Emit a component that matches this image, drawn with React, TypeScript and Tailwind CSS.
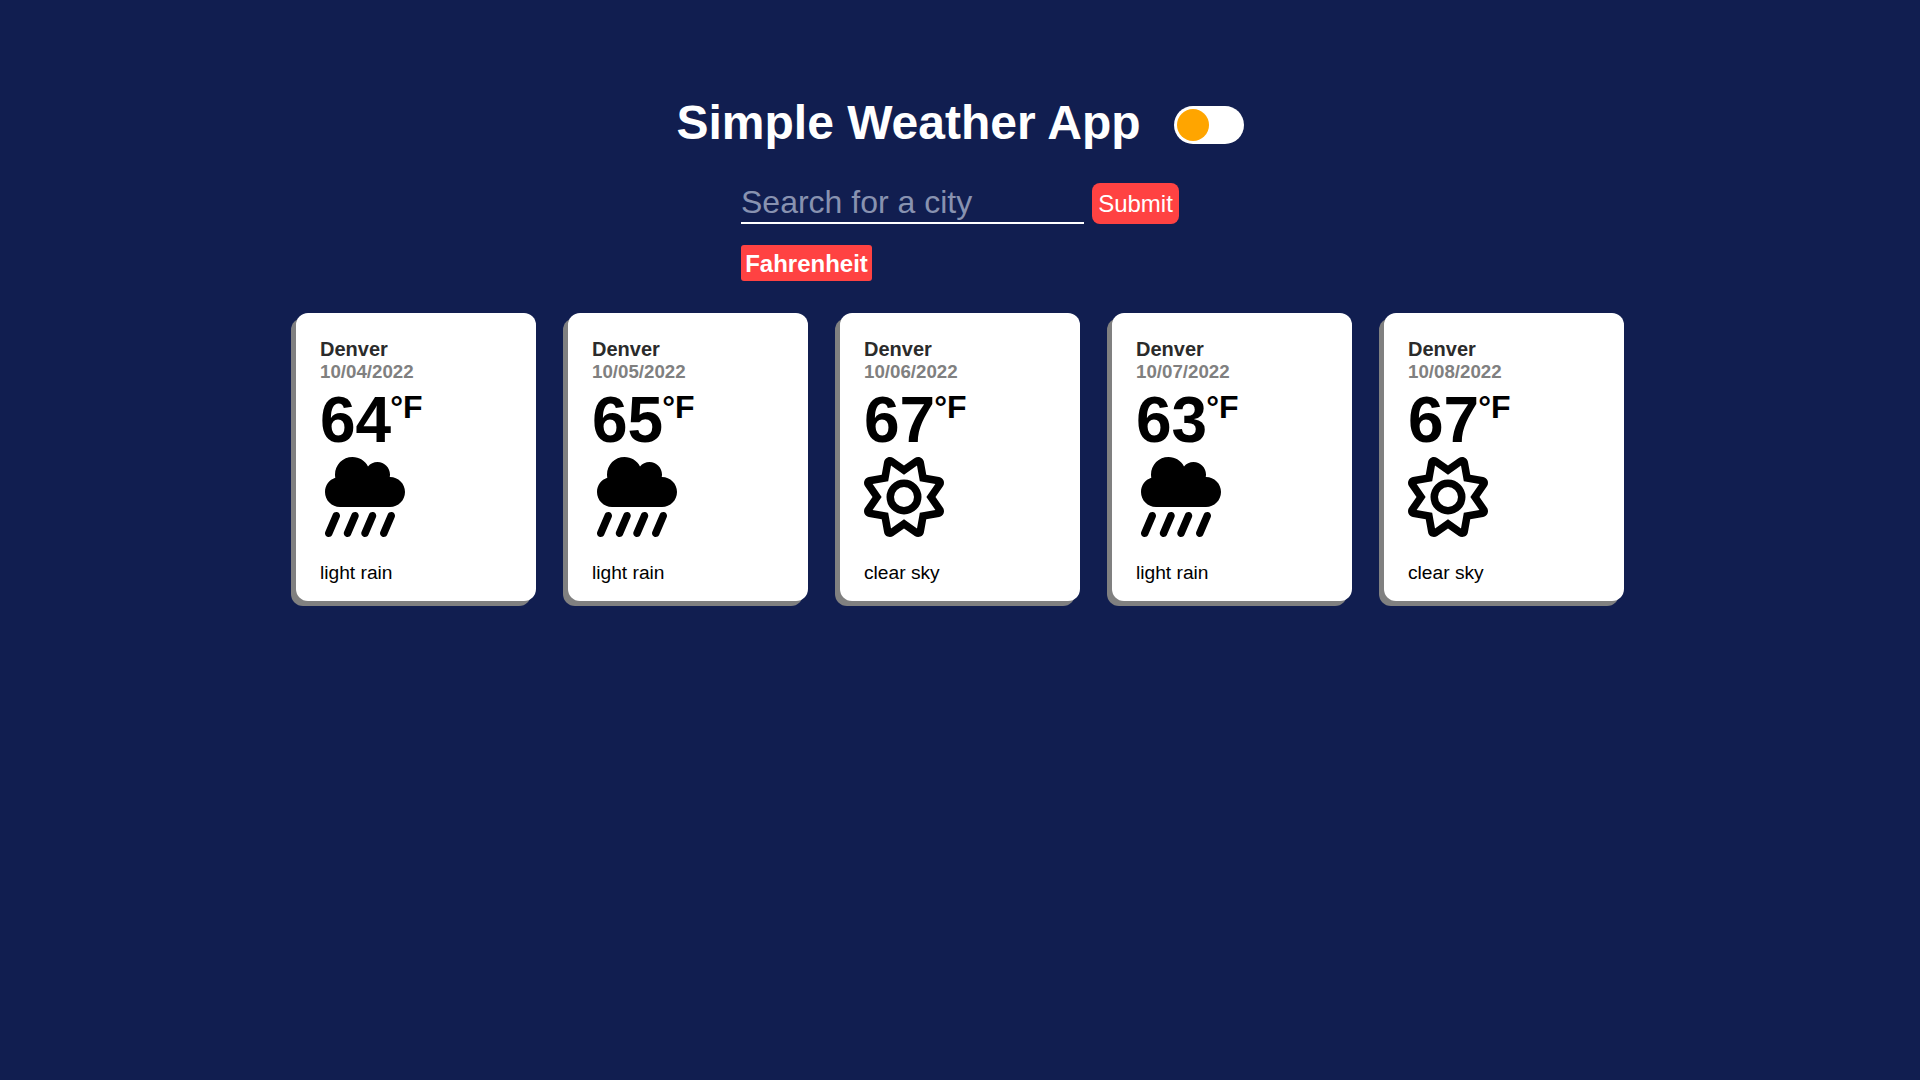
import { FaCloudShowersHeavy } from "react-icons/fa6";

type Day = { date: string; temp: number; sky: "light rain" | "clear sky" };

const days: Day[] = [
  { date: "10/04/2022", temp: 64, sky: "light rain" },
  { date: "10/05/2022", temp: 65, sky: "light rain" },
  { date: "10/06/2022", temp: 67, sky: "clear sky" },
  { date: "10/07/2022", temp: 63, sky: "light rain" },
  { date: "10/08/2022", temp: 67, sky: "clear sky" },
];

function SunIcon({ className }: { className?: string }) {
  return (
    <svg viewBox="0 0 512 512" fill="currentColor" fillRule="evenodd" className={className}>
      <path d="M505.2 324.8l-47.73-68.78l47.75-68.81c7.359-10.62 8.797-24.12 3.844-36.06c-4.969-11.94-15.52-20.44-28.22-22.72l-82.39-14.88l-14.89-82.41c-2.281-12.72-10.76-23.25-22.69-28.22c-11.97-4.936-25.42-3.498-36.12 3.844L256 54.49L187.2 6.709C176.5-.6016 163.1-2.039 151.1 2.896c-11.92 4.971-20.4 15.5-22.7 28.19l-14.89 82.44L31.15 128.4C18.42 130.7 7.854 139.2 2.9 151.2C-2.051 163.1-.5996 176.6 6.775 187.2l47.73 68.78l-47.75 68.81c-7.359 10.62-8.795 24.12-3.844 36.06c4.969 11.94 15.52 20.44 28.22 22.72l82.39 14.88l14.89 82.41c2.297 12.72 10.78 23.25 22.7 28.22c11.95 4.906 25.44 3.531 36.09-3.844L256 457.5l68.83 47.78C331.3 509.7 338.8 512 346.3 512c4.906 0 9.859-.9687 14.56-2.906c11.92-4.969 20.4-15.5 22.7-28.19l14.89-82.44l82.37-14.88c12.73-2.281 23.3-10.78 28.25-22.75C514.1 348.9 512.6 335.4 505.2 324.8zM456.8 339.2l-99.61 18l-18 99.63L256 399.1L172.8 456.8l-18-99.63l-99.61-18L112.9 256L55.23 172.8l99.61-18l18-99.63L256 112.9l83.15-57.75l18.02 99.66l99.61 18L399.1 256L456.8 339.2z" />
      <circle cx="256" cy="256" r="88" fill="none" stroke="currentColor" strokeWidth="48" />
    </svg>
  );
}

function WeatherCard({ day }: { day: Day }) {
  return (
    <article className="h-72 w-60 rounded-xl bg-white px-6 pt-[25px] text-black shadow-[-5px_5px_0_0_#808080]">
      <h2 className="text-[20px] leading-[23px] font-bold text-[#2b2b2b]">Denver</h2>
      <p className="text-[18.72px] leading-[22px] font-bold text-[#808080]">{day.date}</p>
      <div className="mt-0.5 flex h-[72px] items-start font-bold">
        <span className="text-[64px] leading-[71px]">{day.temp}</span>
        <span className="-ml-px text-[32px] leading-[45px]">°F</span>
      </div>
      {day.sky === "light rain" ? (
        <FaCloudShowersHeavy className="ml-[5px] size-20" />
      ) : (
        <SunIcon className="size-20" />
      )}
      <p className="mt-[25px] text-[19.2px] leading-[22px]">{day.sky}</p>
    </article>
  );
}

export default function App() {
  return (
    <main className="flex min-h-screen flex-col items-center bg-[#111e50] pt-24 font-['Liberation_Sans',Arial,sans-serif] text-white">
      <header className="flex h-[55px] items-center gap-[33px]">
        <h1 className="pb-px text-[48px] leading-[54px] font-bold">Simple Weather App</h1>
        <button aria-label="Toggle theme" className="mt-[3px] flex h-[38px] w-[70px] items-center rounded-full bg-white pl-[3px]">
          <span className="size-8 rounded-full bg-[#ffa500]" />
        </button>
      </header>
      <section className="mt-8 w-[438px]">
        <form className="flex h-[41px] items-start gap-2">
          <input
            placeholder="Search for a city"
            className="h-[41px] w-[343px] border-b-2 border-white bg-transparent text-[32px] leading-[37px] outline-none placeholder:text-[#8892b0]"
          />
          <button type="button" className="h-[41px] w-[87px] rounded-lg bg-[#ff4242] text-[24px] leading-[41px]">
            Submit
          </button>
        </form>
        <button className="mt-[21px] block h-9 w-[131px] rounded-[3px] bg-[#ff4242] pt-px text-[24px] leading-9 font-bold">
          Fahrenheit
        </button>
      </section>
      <section className="mt-8 flex gap-8">
        {days.map((day) => (
          <WeatherCard key={day.date} day={day} />
        ))}
      </section>
    </main>
  );
}
